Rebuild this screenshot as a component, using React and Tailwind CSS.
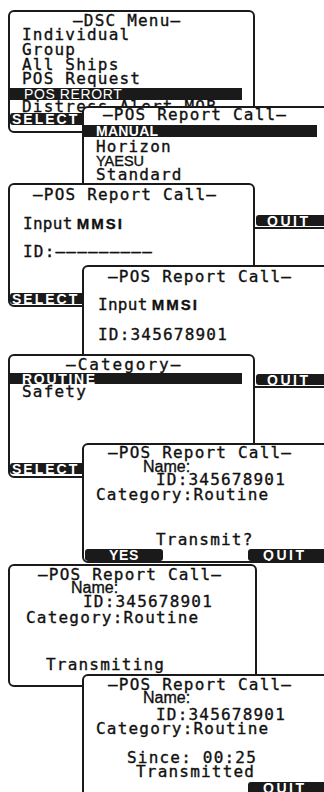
const MONO =
  "h-[14px] leading-[14px] whitespace-pre font-['DejaVu_Sans_Mono',monospace] text-[16px] tracking-[1.2px] text-[#111111] [-webkit-text-stroke:0.35px_#111111]";
const SANS =
  "h-[14px] leading-[14px] whitespace-pre font-['Liberation_Sans',Arial,sans-serif] text-[#111111] [-webkit-text-stroke:0.35px_#111111]";
const BAR =
  "bg-[#1a1a1a] text-white flex items-center whitespace-pre font-['Liberation_Sans',Arial,sans-serif] font-bold text-[14px] leading-none";
const SCREEN =
  "absolute bg-white border-2 border-[#1a1a1a] rounded-[6px] overflow-hidden flex flex-col";

function Screen1() {
  return (
    <div className={`${SCREEN} left-[8px] top-[10px] w-[247px] h-[123px] pt-[2px]`}>
      <div className={`${MONO} pl-[63px]`}>–DSC Menu–</div>
      <div className={`${MONO} pl-[12px]`}>Individual</div>
      <div className={`${MONO} pl-[12px] mt-[1px]`}>Group</div>
      <div className={`${MONO} pl-[12px] mt-[1px]`}>All Ships</div>
      <div className={`${MONO} pl-[12px]`}>POS Request</div>
      <div className={`${BAR} mt-[2px] h-[12px] w-[232px] pl-[14px] font-normal text-[14.5px] tracking-[0.6px]`}>
        POS RERORT
      </div>
      <div className={`${MONO} pl-[12px]`}>Distress Alert MOB</div>
      <div className={`${BAR} mt-[-1px] h-[12px] w-[76px] rounded-[3px] pl-[2px] tracking-[2px]`}>
        SELECT
      </div>
    </div>
  );
}

function Screen2() {
  return (
    <div className={`${SCREEN} left-[82px] top-[106px] w-[260px] h-[123px]`}>
      <div className={`${MONO} pl-[19px]`}>–POS Report Call–</div>
      <div className={`${BAR} mt-[3px] h-[12px] w-[233px] pl-[12px] tracking-[0.3px]`}>MANUAL</div>
      <div className={`${MONO} pl-[12px] mt-[3px]`}>Horizon</div>
      <div className={`${SANS} pl-[12px] text-[14.5px]`}>YAESU</div>
      <div className={`${MONO} pl-[12px]`}>Standard</div>
      <div className={`${BAR} mt-[33px] ml-[172px] h-[11px] rounded-l-[3px] pl-[11px] tracking-[2.5px]`}>
        QUIT
      </div>
    </div>
  );
}

function InputMMSI({ className }) {
  return (
    <div className={`${MONO} ${className} flex items-baseline`}>
      <span className="tracking-[0.3px]">Input</span>
      <span className="ml-[4px] font-['Liberation_Sans',Arial,sans-serif] font-bold text-[15px] tracking-[2px]">
        MMSI
      </span>
    </div>
  );
}

function Screen3() {
  return (
    <div className={`${SCREEN} left-[8px] top-[183px] w-[247px] h-[124px] pt-[3px]`}>
      <div className={`${MONO} pl-[23px]`}>–POS Report Call–</div>
      <InputMMSI className="pl-[13px] mt-[15px]" />
      <div className={`${MONO} pl-[13px] mt-[14px]`}>ID:–––––––––</div>
      <div className={`${BAR} mt-[34px] h-[11px] w-[76px] rounded-[3px] pl-[2px] tracking-[2px]`}>
        SELECT
      </div>
    </div>
  );
}

function Screen4() {
  return (
    <div className={`${SCREEN} left-[82px] top-[265px] w-[260px] h-[123px] pt-[3px]`}>
      <div className={`${MONO} pl-[24px]`}>–POS Report Call–</div>
      <InputMMSI className="pl-[14px] mt-[14px]" />
      <div className={`${MONO} pl-[14px] mt-[16px]`}>ID:345678901</div>
      <div className={`${BAR} mt-[32px] ml-[172px] h-[11px] rounded-l-[3px] pl-[11px] tracking-[2.5px]`}>
        QUIT
      </div>
    </div>
  );
}

function Screen5() {
  return (
    <div className={`${SCREEN} left-[8px] top-[354px] w-[247px] h-[124px] pt-[2px]`}>
      <div className={`${MONO} pl-[56px] tracking-[2px]`}>–Category–</div>
      <div className={`${BAR} mt-[1px] h-[11px] w-[232px] pl-[12px] tracking-[1.7px]`}>ROUTINE</div>
      <div className={`${MONO} pl-[12px] mt-[1px]`}>Safety</div>
      <div className={`${BAR} mt-[64px] h-[11px] w-[76px] rounded-[3px] pl-[2px] tracking-[2px]`}>
        SELECT
      </div>
    </div>
  );
}

function Screen6() {
  return (
    <div className={`${SCREEN} left-[82px] top-[443px] w-[260px] h-[120px] pt-[1px]`}>
      <div className={`${MONO} pl-[24px]`}>–POS Report Call–</div>
      <div className={`${SANS} pl-[59px] text-[16px]`}>Name:</div>
      <div className={`${MONO} pl-[72px] mt-[-1px]`}>ID:345678901</div>
      <div className={`${MONO} pl-[12px] mt-[1px]`}>Category:Routine</div>
      <div className={`${MONO} pl-[72px] mt-[31px]`}>Transmit?</div>
      <div className="flex mt-[2px] h-[12px]">
        <div className={`${BAR} h-[12px] w-[78px] ml-[1px] rounded-[3px] justify-center tracking-[0.7px]`}>
          YES
        </div>
        <div className={`${BAR} h-[12px] ml-[85px] flex-1 rounded-l-[3px] pl-[15px] tracking-[2.5px]`}>
          QUIT
        </div>
      </div>
    </div>
  );
}

function Screen7() {
  return (
    <div className={`${SCREEN} left-[8px] top-[564px] w-[249px] h-[123px] pt-[2px]`}>
      <div className={`${MONO} pl-[28px]`}>–POS Report Call–</div>
      <div className={`${SANS} pl-[61px] text-[16px] mt-[-1px]`}>Name:</div>
      <div className={`${MONO} pl-[73px]`}>ID:345678901</div>
      <div className={`${MONO} pl-[16px] mt-[2px]`}>Category:Routine</div>
      <div className={`${MONO} pl-[36px] mt-[33px]`}>Transmiting</div>
    </div>
  );
}

function Screen8() {
  return (
    <div className={`${SCREEN} left-[82px] top-[674px] w-[260px] h-[130px] pt-[2px]`}>
      <div className={`${MONO} pl-[24px]`}>–POS Report Call–</div>
      <div className={`${SANS} pl-[59px] text-[16px] mt-[-1px]`}>Name:</div>
      <div className={`${MONO} pl-[72px] mt-[3px]`}>ID:345678901</div>
      <div className={`${MONO} pl-[12px]`}>Category:Routine</div>
      <div className={`${MONO} pl-[43px] mt-[15px]`}>Since: 00:25</div>
      <div className={`${MONO} pl-[52px]`}>Transmitted</div>
      <div className={`${BAR} mt-[3px] ml-[164px] h-[12px] rounded-l-[3px] pl-[15px] tracking-[2.5px]`}>
        QUIT
      </div>
    </div>
  );
}

export default function App() {
  return (
    <div className="relative w-[324px] h-[792px] bg-white overflow-hidden">
      <Screen1 />
      <Screen2 />
      <Screen3 />
      <Screen4 />
      <Screen5 />
      <Screen6 />
      <Screen7 />
      <Screen8 />
    </div>
  );
}
